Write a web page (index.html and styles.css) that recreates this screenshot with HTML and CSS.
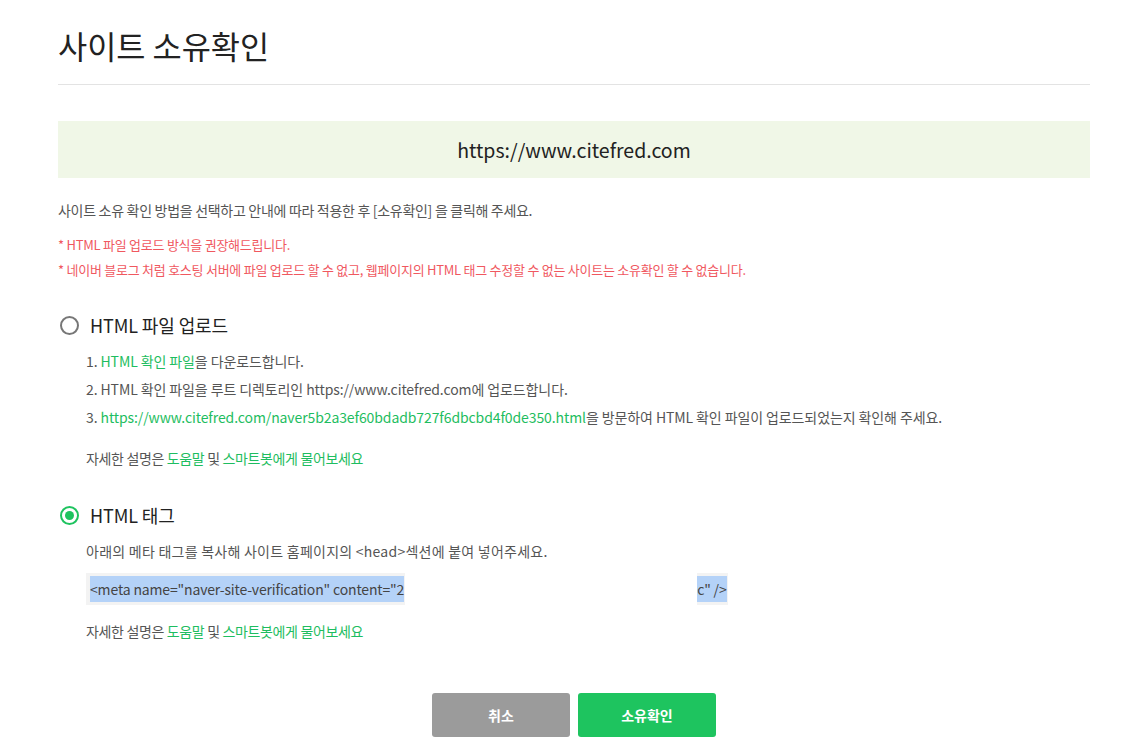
FILE: index.html
```html
<!DOCTYPE HTML>
<html>
<head>
<meta http-equiv='Content-type' content='text/html; charset=utf-8'>
<meta name='viewport' content='width=device-width, initial-scale=1.0'>
<title>사이트 소유확인</title>
<link rel="stylesheet" href="styles.css">
</head>

<body>
<div class="page">
	<h1 class="title">사이트 소유확인</h1>

	<div class="site-box">https://www.citefred.com</div>

	<p class="desc">사이트 소유 확인 방법을 선택하고 안내에 따라 적용한 후 [소유확인] 을 클릭해 주세요.</p>
	<div class="notice">
		<p>* HTML 파일 업로드 방식을 권장해드립니다.</p>
		<p>* 네이버 블로그 처럼 호스팅 서버에 파일 업로드 할 수 없고, 웹페이지의 HTML 태그 수정할 수 없는 사이트는 소유확인 할 수 없습니다.</p>
	</div>

	<!-- HTML 파일 업로드 -->
	<div class="method">
		<label class="method-head"><span class="radio"></span>HTML 파일 업로드</label>
		<ol class="steps">
			<li>1. <a href="#">HTML 확인 파일</a>을 다운로드합니다.</li>
			<li>2. HTML 확인 파일을 루트 디렉토리인 https://www.citefred.com에 업로드합니다.</li>
			<li>3. <a href="#">https://www.citefred.com/naver5b2a3ef60bdadb727f6dbcbd4f0de350.html</a>을 방문하여 HTML 확인 파일이 업로드되었는지 확인해 주세요.</li>
		</ol>
		<p class="help">자세한 설명은 <a href="#">도움말</a> 및 <a href="#">스마트봇에게 물어보세요</a></p>
	</div>

	<!-- HTML 태그 -->
	<div class="method">
		<label class="method-head"><span class="radio checked"></span>HTML 태그</label>
		<p class="guide">아래의 메타 태그를 복사해 사이트 홈페이지의 &lt;head&gt;섹션에 붙여 넣어주세요.</p>
		<div class="meta-row">
			<span class="meta-part"><span class="sel">&lt;meta name="naver-site-verification" content="2</span></span>
			<span class="meta-part meta-end"><span class="sel">c" /&gt;</span></span>
		</div>
		<p class="help help-tag">자세한 설명은 <a href="#">도움말</a> 및 <a href="#">스마트봇에게 물어보세요</a></p>
	</div>

	<div class="buttons">
		<button class="btn btn-cancel">취소</button>
		<button class="btn btn-ok">소유확인</button>
	</div>
</div>
</body>
</html>
```

FILE: styles.css
```css
body{
margin:0;
font-family:"Noto Sans CJK KR","Noto Sans",sans-serif;
color:#444;
background:#fff;
}

.page {
  width: 1032px;
  padding: 22px 0 0 58px;
}

.title {
  margin: 0;
  padding-bottom: 16px;
  border-bottom: 1px solid #e3e3e3;
  font-size: 31.7px;
  line-height: 46px;
  font-weight: 400;
  color: #222;
}

.site-box {
  margin-top: 36px;
  height: 57px;
  line-height: 57px;
  background-color: #f0f7e7;
  text-align: center;
  font-size: 19.5px;
  color: #222;
}

p { margin: 0; }

.desc {
  margin-top: 22px;
  font-size: 14px;
  line-height: 20px;
  color: #555;
  letter-spacing: -0.3px;
}

.notice {
  margin-top: 12px;
  font-size: 13px;
  line-height: 25px;
  color: #f0585f;
  letter-spacing: -0.25px;
}

.method-head {
  display: flex;
  align-items: center;
  font-size: 18px;
  line-height: 26px;
  color: #222;
  margin-top: 30px;
  letter-spacing: -0.1px;
}

.radio {
  width: 15px;
  height: 15px;
  border: 2px solid #777;
  border-radius: 50%;
  margin: 0 11px 0 2px;
  box-sizing: content-box;
  position: relative;
}
.radio.checked {
  border-color: #1ec35f;
}
.radio.checked:after {
  content: "";
  position: absolute;
  left: 3px;
  top: 3px;
  width: 9px;
  height: 9px;
  border-radius: 50%;
  background: #1ec35f;
}

.steps {
  list-style: none;
  margin: 9px 0 0 0;
  padding: 0 0 0 28px;
  font-size: 14px;
  line-height: 28px;
  color: #555;
  letter-spacing: -0.1px;
}

a {
  color: #1ebd60;
  text-decoration: none;
}

.help {
  margin-top: 13px;
  padding-left: 28px;
  font-size: 14px;
  line-height: 28px;
  color: #555;
  letter-spacing: -0.35px;
}
.help-tag {
  margin-top: 12px;
}

.guide {
  margin-top: 9px;
  padding-left: 28px;
  font-size: 14px;
  line-height: 28px;
  color: #555;
  letter-spacing: 0.25px;
}

.meta-row {
  display: flex;
  margin: 8px 0 0 28px;
  height: 32px;
}
.meta-part {
  display: flex;
  align-items: center;
  padding: 3px 1px 3px 4px;
  background: #f3f3f3;
}
.meta-end {
  margin-left: 292px;
  padding-left: 0;
}
.sel {
  display: block;
  line-height: 26px;
  background: #b4d2f8;
  font-size: 14px;
  color: #444;
  letter-spacing: -0.15px;
}

.buttons {
  display: flex;
  justify-content: center;
  gap: 8px;
  margin-top: 48px;
}
.btn {
  width: 138px;
  height: 44px;
  border: none;
  border-radius: 3px;
  font-family: inherit;
  font-size: 14px;
  font-weight: 700;
  color: #fff;
}
.btn-cancel { background: #9b9b9b; }
.btn-ok { background: #1ec45f; }
```
